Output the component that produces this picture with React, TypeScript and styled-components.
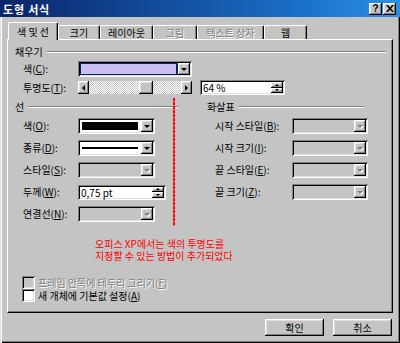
import React from "react";
import styled, { createGlobalStyle, css } from "styled-components";

const FACE = "#c4c4c4";

const GlobalStyle = createGlobalStyle`
  html, body {
    margin: 0;
    padding: 0;
    background: ${FACE};
  }
  body {
    font-family: "Noto Sans CJK KR", "Liberation Sans", sans-serif;
    font-size: 10px;
    line-height: 12px;
  }
  u {
    text-decoration-thickness: 1px;
    text-underline-offset: 1px;
  }
`;

const raised = css`
  background: ${FACE};
  box-shadow: inset -1px -1px #000, inset 1px 1px #fff, inset -2px -2px #808080,
    inset 2px 2px #dfdfdf;
`;

const sunken = css`
  box-shadow: inset 1px 1px #808080, inset -1px -1px #fff, inset 2px 2px #000,
    inset -2px -2px #dfdfdf;
`;

const disabledText = css`
  color: #808080;
  text-shadow: 1px 1px 0 #fff;
`;

const tabs = [
  { label: "색 및 선", w: 50, active: true },
  { label: "크기", w: 42 },
  { label: "레이아웃", w: 53 },
  { label: "그림", w: 44, disabled: true },
  { label: "텍스트 상자", w: 67, disabled: true },
  { label: "웹", w: 43 }
];

const arrowRows = [
  ["시작 스타일", "B"],
  ["시작 크기", "I"],
  ["끝 스타일", "E"],
  ["끝 크기", "Z"]
];

const transparency = 64;

export default function App() {
  // slider thumb position from the value
  const trackW = 92;
  const thumbW = 14;
  const thumbLeft = Math.round((transparency / 100) * (trackW - thumbW));

  return (
    <>
      <GlobalStyle />
      <Window>
        <TitleBar>
          <TitleText>도형 서식</TitleText>
          <TitleButtons>
            <TitleBtn>?</TitleBtn>
            <TitleBtn>
              <svg width="8" height="7" viewBox="0 0 8 7">
                <path d="M0 0h2l2 2.5L6 0h2L5 3.5 8 7H6L4 4.5 2 7H0l3-3.5z" fill="#000" />
              </svg>
            </TitleBtn>
          </TitleButtons>
        </TitleBar>

        <Body>
          <TabRow>
            {tabs.map(t => (
              <Tab key={t.label} $w={t.w} $active={t.active} $disabled={t.disabled}>
                {t.label}
              </Tab>
            ))}
          </TabRow>

          <Panel>
            <GroupHeader>
              채우기
              <GrooveLine />
            </GroupHeader>
            <FieldRow $mt={3}>
              <FieldLabel $w={55}>
                색(<u>C</u>):
              </FieldLabel>
              <Combo $w={114}>
                <ComboValue $focus>
                  <Swatch $color="#cbbff2" $m={0} />
                </ComboValue>
                <DropBtn>
                  <DownArrow />
                </DropBtn>
              </Combo>
            </FieldRow>
            <FieldRow $mt={3} $h={15}>
              <FieldLabel $w={55}>
                투명도(<u>T</u>):
              </FieldLabel>
              <Slider>
                <ArrowBtn>
                  <LeftArrow />
                </ArrowBtn>
                <Track>
                  <Thumb style={{ marginLeft: thumbLeft }} />
                </Track>
                <ArrowBtn>
                  <RightArrow />
                </ArrowBtn>
              </Slider>
              <SpinEdit $w={85} $ml={8}>
                <EditText>64 %</EditText>
                <Spin>
                  <SpinBtn>
                    <TinyUp />
                  </SpinBtn>
                  <SpinBtn>
                    <TinyDown />
                  </SpinBtn>
                </Spin>
              </SpinEdit>
            </FieldRow>

            <Columns>
              <Column $w={163}>
                <GroupHeader>
                  선
                  <GrooveLine />
                </GroupHeader>
                <Rows>
                  <FieldRow>
                    <FieldLabel $w={55}>
                      색(<u>O</u>):
                    </FieldLabel>
                    <Combo $w={77}>
                      <ComboValue>
                        <Swatch $color="#000" $m={1} />
                      </ComboValue>
                      <DropBtn>
                        <DownArrow />
                      </DropBtn>
                    </Combo>
                  </FieldRow>
                  <FieldRow>
                    <FieldLabel $w={55}>
                      종류(<u>D</u>):
                    </FieldLabel>
                    <Combo $w={77}>
                      <ComboValue>
                        <LineSample />
                      </ComboValue>
                      <DropBtn>
                        <DownArrow />
                      </DropBtn>
                    </Combo>
                  </FieldRow>
                  <FieldRow>
                    <FieldLabel $w={55}>
                      스타일(<u>S</u>):
                    </FieldLabel>
                    <Combo $w={77} $disabled>
                      <ComboValue />
                      <DropBtn>
                        <DownArrow $disabled />
                      </DropBtn>
                    </Combo>
                  </FieldRow>
                  <FieldRow>
                    <FieldLabel $w={55}>
                      두께(<u>W</u>):
                    </FieldLabel>
                    <SpinEdit $w={88}>
                      <EditText>0,75 pt</EditText>
                      <Spin>
                        <SpinBtn>
                          <TinyUp />
                        </SpinBtn>
                        <SpinBtn>
                          <TinyDown />
                        </SpinBtn>
                      </Spin>
                    </SpinEdit>
                  </FieldRow>
                  <FieldRow>
                    <FieldLabel $w={55}>
                      연결선(<u>N</u>):
                    </FieldLabel>
                    <Combo $w={77} $disabled>
                      <ComboValue />
                      <DropBtn>
                        <DownArrow $disabled />
                      </DropBtn>
                    </Combo>
                  </FieldRow>
                </Rows>
              </Column>

              <Column $w={161}>
                <GroupHeader $mr={4}>
                  화살표
                  <GrooveLine />
                </GroupHeader>
                <Rows>
                  {arrowRows.map(([name, key]) => (
                    <FieldRow key={key}>
                      <FieldLabel $w={77}>
                        {name}(<u>{key}</u>):
                      </FieldLabel>
                      <Combo $w={76} $disabled>
                        <ComboValue />
                        <DropBtn>
                          <DownArrow $disabled />
                        </DropBtn>
                      </Combo>
                    </FieldRow>
                  ))}
                </Rows>
              </Column>
            </Columns>

            <Note>
              <NoteLine>오피스 XP에서는 색의 투명도를</NoteLine>
              <NoteLine>지정할 수 있는 방법이 추가되었다</NoteLine>
            </Note>

            <CheckRow $mt={14} $disabled>
              <CheckBox $disabled />
              <CheckText>
                프레임 안쪽에 테두리 그리기(<u>F</u>)
              </CheckText>
            </CheckRow>
            <CheckRow>
              <CheckBox />
              <CheckText>
                새 개체에 기본값 설정(<u>A</u>)
              </CheckText>
            </CheckRow>

            <RedGuide />
          </Panel>

          <ButtonRow>
            <PushButton>확인</PushButton>
            <PushButton>취소</PushButton>
          </ButtonRow>
        </Body>
      </Window>
    </>
  );
}

const Window = styled.div`
  width: 400px;
  height: 343px;
  box-sizing: border-box;
  display: flex;
  flex-direction: column;
  background: ${FACE};
  color: #000;
  box-shadow: inset 1px 0 #dfdfdf, inset 2px 0 #fff, inset -1px -1px #000,
    inset -2px -2px #808080;
  overflow: hidden;
`;

const TitleBar = styled.div`
  height: 17px;
  display: flex;
  align-items: center;
  padding: 0 4px 0 3px;
  background: linear-gradient(to right, #0a246a, #1a6fc8 75%, #2c8fe6);
  color: #fff;
  font-size: 11px;
  font-weight: bold;
`;

const TitleText = styled.div`
  flex: 1;
  letter-spacing: 0.8px;
`;

const TitleButtons = styled.div`
  display: flex;
  gap: 1px;
`;

const TitleBtn = styled.div`
  ${raised};
  width: 13px;
  height: 12px;
  display: flex;
  align-items: center;
  justify-content: center;
  color: #000;
  font-family: "Liberation Sans", sans-serif;
  font-size: 10px;
  font-weight: bold;
  line-height: 1;
`;

const Body = styled.div`
  flex: 1;
  display: flex;
  flex-direction: column;
  padding: 6px 7px 0 7px;
`;

const TabRow = styled.div`
  display: flex;
  align-items: flex-end;
  height: 16px;
  padding-left: 1px;
  position: relative;
  z-index: 1;
`;

const Tab = styled.div<{ $w: number; $active?: boolean; $disabled?: boolean }>`
  width: ${p => p.$w}px;
  height: ${p => (p.$active ? 18 : 14)}px;
  margin-bottom: ${p => (p.$active ? -1 : 0)}px;
  box-sizing: border-box;
  display: flex;
  align-items: center;
  justify-content: center;
  background: ${FACE};
  border-top: 1px solid #fff;
  border-left: 1px solid #fff;
  border-right: 1px solid #000;
  border-radius: 2px 2px 0 0;
  box-shadow: inset -1px 0 #808080;
  padding-top: ${p => (p.$active ? 0 : 1)}px;
  ${p => p.$disabled && disabledText};
`;

const Panel = styled.div`
  position: relative;
  height: 274px;
  box-sizing: border-box;
  display: flex;
  flex-direction: column;
  border: 1px solid;
  border-color: #fff #000 #000 #fff;
  box-shadow: inset -1px -1px #808080;
  padding: 6px 6px 0 7px;
`;

const GroupHeader = styled.div<{ $mr?: number }>`
  display: flex;
  align-items: center;
  height: 12px;
  margin-right: ${p => p.$mr || 0}px;
`;

const GrooveLine = styled.div`
  flex: 1;
  height: 0;
  margin-left: 4px;
  border-top: 1px solid #808080;
  border-bottom: 1px solid #fff;
`;

const FieldRow = styled.div<{ $mt?: number; $h?: number }>`
  display: flex;
  align-items: center;
  height: ${p => p.$h || 16}px;
  margin-left: 8px;
  margin-top: ${p => p.$mt || 0}px;
`;

const FieldLabel = styled.div<{ $w: number }>`
  width: ${p => p.$w}px;
  flex: none;
  white-space: nowrap;
`;

const Combo = styled.div<{ $w: number; $disabled?: boolean }>`
  ${sunken};
  width: ${p => p.$w}px;
  height: 16px;
  box-sizing: border-box;
  padding: 2px;
  display: flex;
  background: ${p => (p.$disabled ? FACE : "#fff")};
`;

const ComboValue = styled.div<{ $focus?: boolean }>`
  flex: 1;
  display: flex;
  align-items: center;
  padding: 1px;
  background: ${p => (p.$focus ? "#0a246a" : "transparent")};
`;

const Swatch = styled.div<{ $color: string; $m: number }>`
  flex: 1;
  align-self: stretch;
  margin: ${p => p.$m}px ${p => p.$m + 1}px ${p => p.$m}px ${p => p.$m}px;
  background: ${p => p.$color};
`;

const LineSample = styled.div`
  flex: 1;
  height: 2px;
  margin: 0 2px 0 1px;
  background: #000;
`;

const DropBtn = styled.div`
  ${raised};
  width: 12px;
  flex: none;
  display: flex;
  align-items: center;
  justify-content: center;
`;

const DownArrow = styled.div<{ $disabled?: boolean }>`
  width: 0;
  height: 0;
  border-left: 3px solid transparent;
  border-right: 3px solid transparent;
  border-top: 3px solid ${p => (p.$disabled ? "#808080" : "#000")};
  margin-top: 1px;
  ${p => p.$disabled && "filter: drop-shadow(1px 1px 0 #fff);"};
`;

const Slider = styled.div`
  width: 114px;
  height: 13px;
  display: flex;
  flex: none;
`;

const ArrowBtn = styled.div`
  ${raised};
  width: 11px;
  flex: none;
  display: flex;
  align-items: center;
  justify-content: center;
`;

const LeftArrow = styled.div`
  width: 0;
  height: 0;
  border-top: 3px solid transparent;
  border-bottom: 3px solid transparent;
  border-right: 3px solid #000;
`;

const RightArrow = styled.div`
  width: 0;
  height: 0;
  border-top: 3px solid transparent;
  border-bottom: 3px solid transparent;
  border-left: 3px solid #000;
`;

const Track = styled.div`
  flex: 1;
  display: flex;
  background: repeating-conic-gradient(#fff 0 25%, ${FACE} 0 50%) 0 0 / 2px 2px;
`;

const Thumb = styled.div`
  ${raised};
  width: 14px;
`;

const SpinEdit = styled.div<{ $w: number; $ml?: number }>`
  ${sunken};
  width: ${p => p.$w}px;
  height: 15px;
  margin-left: ${p => p.$ml || 0}px;
  box-sizing: border-box;
  padding: 2px;
  display: flex;
  background: #fff;
`;

const EditText = styled.div`
  flex: 1;
  padding-left: 1px;
  line-height: 11px;
`;

const Spin = styled.div`
  width: 12px;
  display: flex;
  flex-direction: column;
`;

const SpinBtn = styled.div`
  ${raised};
  flex: 1;
  display: flex;
  align-items: center;
  justify-content: center;
`;

const TinyUp = styled.div`
  width: 0;
  height: 0;
  border-left: 2px solid transparent;
  border-right: 2px solid transparent;
  border-bottom: 2px solid #000;
`;

const TinyDown = styled.div`
  width: 0;
  height: 0;
  border-left: 2px solid transparent;
  border-right: 2px solid transparent;
  border-top: 2px solid #000;
`;

const Columns = styled.div`
  display: flex;
  gap: 29px;
  margin-top: 6px;
`;

const Column = styled.div<{ $w: number }>`
  width: ${p => p.$w}px;
  display: flex;
  flex-direction: column;
`;

const Rows = styled.div`
  display: flex;
  flex-direction: column;
  gap: 6px;
  margin-top: 5px;
`;

const Note = styled.div`
  margin: 16px 0 0 80px;
  color: #ff0000;
  display: flex;
  flex-direction: column;
`;

const NoteLine = styled.div`
  height: 12px;
  line-height: 12px;
  white-space: nowrap;
`;

const CheckRow = styled.div<{ $mt?: number; $disabled?: boolean }>`
  display: flex;
  align-items: center;
  gap: 3px;
  height: 13px;
  margin: ${p => p.$mt || 0}px 0 0 7px;
  ${p => p.$disabled && disabledText};
`;

const CheckText = styled.span`
  white-space: nowrap;
  line-height: 12px;
`;

const CheckBox = styled.div<{ $disabled?: boolean }>`
  ${sunken};
  width: 13px;
  height: 13px;
  flex: none;
  background: ${p => (p.$disabled ? FACE : "#fff")};
`;

const RedGuide = styled.div`
  position: absolute;
  left: 165px;
  top: 58px;
  width: 2px;
  height: 128px;
  background: repeating-linear-gradient(to bottom, #ff0000 0 3px, #ff6a6a 3px 4px);
`;

const ButtonRow = styled.div`
  display: flex;
  justify-content: flex-end;
  gap: 9px;
  margin-top: 6px;
  padding-right: 1px;
`;

const PushButton = styled.div`
  ${raised};
  width: 59px;
  height: 17px;
  display: flex;
  align-items: center;
  justify-content: center;
`;
